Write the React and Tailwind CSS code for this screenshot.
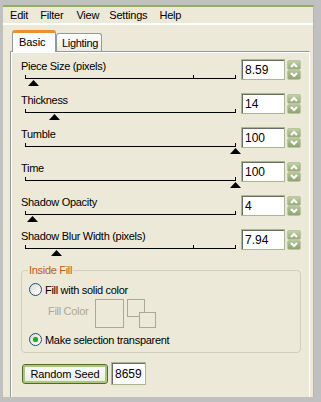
import React from 'react';

const rows = [
  { label: 'Piece Size (pixels)', value: '8.59', pos: 0.04, mid: true },
  { label: 'Thickness', value: '14', pos: 0.14, mid: false },
  { label: 'Tumble', value: '100', pos: 1, mid: false },
  { label: 'Time', value: '100', pos: 1, mid: false },
  { label: 'Shadow Opacity', value: '4', pos: 0.037, mid: false },
  { label: 'Shadow Blur Width (pixels)', value: '7.94', pos: 0.152, mid: true },
];

function Arrow({ up }) {
  return (
    <svg width="8" height="6" viewBox="0 0 8 6">
      <polyline
        points={up ? '1,5 4,2 7,5' : '1,1 4,4 7,1'}
        fill="none"
        stroke="#ffffff"
        strokeWidth="2"
      />
    </svg>
  );
}

function Spinner() {
  return (
    <div className="flex flex-col w-[14px] h-[20px]">
      <div className="h-[10px] flex items-center justify-center rounded-[2px] border border-[#b9c6a0] bg-gradient-to-b from-[#c2cfa6] to-[#98aa7a]">
        <Arrow up />
      </div>
      <div className="h-[10px] flex items-center justify-center rounded-[2px] border border-[#b9c6a0] bg-gradient-to-b from-[#b3c298] to-[#8fa272]">
        <Arrow />
      </div>
    </div>
  );
}

function Slider({ pos, mid }) {
  return (
    <div className="relative w-[211px] h-[10px] mt-[1px]">
      <div className="absolute left-0 right-0 top-[3px] h-px bg-black" />
      <div className="absolute left-0 top-0 w-px h-[4px] bg-black" />
      <div className="absolute right-0 top-0 w-px h-[4px] bg-black" />
      {mid && <div className="absolute left-[168px] top-0 w-px h-[4px] bg-black" />}
      <svg
        className="absolute top-[5px]"
        style={{ left: `${pos * 210 - 5.5}px` }}
        width="11"
        height="6"
        viewBox="0 0 11 6"
      >
        <polygon points="5.5,0 11,6 0,6" fill="#000" />
      </svg>
    </div>
  );
}

function Field({ value, className = '' }) {
  return (
    <div
      className={`h-[21px] border border-[#a6b88c] bg-white shadow-[inset_1px_1px_0_#6b6b6b] pl-[3px] flex items-center text-[12px] tracking-normal ${className}`}
    >
      {value}
    </div>
  );
}

function Radio({ checked }) {
  return (
    <div className="w-[13px] h-[13px] rounded-full border border-[#1c4f7c] bg-gradient-to-br from-[#dcdcd5] to-white flex items-center justify-center">
      {checked && <div className="w-[5px] h-[5px] rounded-full bg-[#2aa52a] shadow-[0_0_1px_#5fd05f]" />}
    </div>
  );
}

export default function App() {
  return (
    <div
      className="w-[321px] h-[402px] bg-[#c0c0c0] pt-[5px] pl-[3px] text-[11px] leading-[14px] text-black tracking-[-0.3px]"
      style={{ fontFamily: '"Liberation Sans", Arial, sans-serif' }}
    >
      <div className="w-[311px] h-[392px] bg-[#ece9d8] border-t-2 border-[#93ab68] border-r border-r-[#b8b6aa] flex flex-col">
        {/* menu bar */}
        <div className="h-[18px] flex items-center border-b-2 border-white tracking-[-0.2px]">
          <span className="ml-[7px]">Edit</span>
          <span className="ml-[12px]">Filter</span>
          <span className="ml-[13px]">View</span>
          <span className="ml-[10px]">Settings</span>
          <span className="ml-[12px]">Help</span>
        </div>

        {/* tabs */}
        <div className="flex items-end h-[26px] pl-[9px]">
          <div className="h-[22px] w-[44px] bg-[#fcfcfe] border-x border-[#919b9c] border-t-[3px] border-t-[#e8912f] rounded-t-[3px] pl-[6px] pt-[2px] relative -mb-px z-10 tracking-[-0.1px]">
            Basic
          </div>
          <div className="h-[18px] w-[46px] bg-gradient-to-b from-white to-[#ecebe5] border border-[#919b9c] border-b-0 rounded-t-[3px] pl-[5px] pt-[2px]">
            Lighting
          </div>
        </div>

        {/* panel */}
        <div className="ml-[7px] w-[300px] flex-1 border-t border-l border-[#919b9c] border-r border-r-white shadow-[inset_1px_1px_0_#ffffff] pt-[7px] pl-[10px] flex flex-col">
          {rows.map((r) => (
            <div key={r.label} className="h-[34px] flex">
              <div className="w-[220px] flex flex-col">
                <div className="h-[14px]">{r.label}</div>
                <div className="ml-[4px] mt-[1px]">
                  <Slider pos={r.pos} mid={r.mid} />
                </div>
              </div>
              <Field value={r.value} className="w-[44px]" />
              <div className="ml-[2px] mt-[1px]">
                <Spinner />
              </div>
            </div>
          ))}

          {/* Inside Fill group */}
          <fieldset className="w-[280px] border border-[#d0d0bf] rounded-[4px] pl-[7px] pb-[6px]">
            <legend className="ml-[-1px] px-[1px] text-[#b5601c]">Inside Fill</legend>
            <div className="flex items-center gap-[3px] mt-[6px] h-[13px]">
              <Radio />
              <span>Fill with solid color</span>
            </div>
            <div className="flex items-start mt-[3px] ml-[19px] h-[30px]">
              <span className="text-[#aca899] mt-[5px]">Fill Color</span>
              <div className="ml-[7px] w-[29px] h-[29px] border border-[#aca899]" />
              <div className="ml-[3px] relative w-[30px] h-[30px]">
                <div className="absolute left-0 top-0 w-[18px] h-[18px] border border-[#aca899] bg-[#ece9d8]" />
                <div className="absolute left-[12px] top-[13px] w-[17px] h-[16px] border border-[#aca899] bg-[#ece9d8]" />
              </div>
            </div>
            <div className="flex items-center gap-[3px] mt-[4px] h-[13px]">
              <Radio checked />
              <span>Make selection transparent</span>
            </div>
          </fieldset>

          <div className="flex items-center mt-[9px] ml-[1px]">
            <div className="w-[86px] h-[20px] rounded-[3px] border border-[#4f6d27] shadow-[inset_0_0_0_2px_#a9c87a] bg-gradient-to-b from-white to-[#ebeae2] flex items-center justify-center tracking-[-0.1px]">
              Random Seed
            </div>
            <Field value="8659" className="ml-[3px] w-[35px] h-[23px]" />
          </div>
        </div>
      </div>
    </div>
  );
}
